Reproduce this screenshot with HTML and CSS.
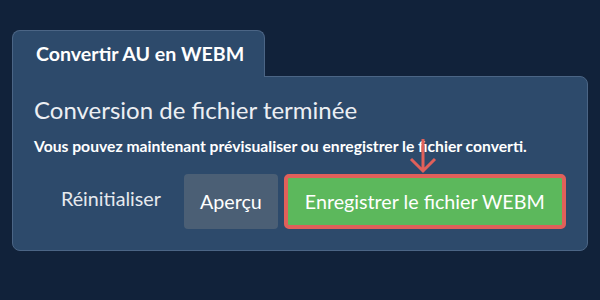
FILE: index.html
```html
<!DOCTYPE html>
<html lang="fr">
<head>
  <meta charset="UTF-8">
  <title>Convertir AU en WEBM</title>
  <link rel="stylesheet" href="styles.css">
</head>
<body>
  <div class="panel">
    <div class="tab">Convertir AU en WEBM</div>
    <div class="card">
      <h2 class="title">Conversion de fichier terminée</h2>
      <p class="text">Vous pouvez maintenant prévisualiser ou enregistrer le fichier converti.</p>
      <div class="actions">
        <button class="btn link">Réinitialiser</button>
        <button class="btn grey">Aperçu</button>
        <div class="save-wrap">
          <button class="btn save">Enregistrer le fichier WEBM</button>
          <svg class="arrow" width="30" height="36" viewBox="0 0 30 36">
            <path d="M15 1 V33 M3 21 L15 33 L27 21" fill="none" stroke="#e0605a" stroke-width="3"/>
          </svg>
        </div>
      </div>
    </div>
  </div>
</body>
</html>
```

FILE: styles.css
```css
body {
  margin: 0;
  background: #11223a;
  font-family: Lato, "Noto Sans", sans-serif;
  color: #fff;
}
.panel {
  padding: 30px 12px 0 12px;
}
.tab {
  display: inline-block;
  box-sizing: border-box;
  width: 253px;
  height: 47px;
  padding: 11px 0 0 23px;
  background: #2d4a6b;
  border: 1px solid #4b6585;
  border-bottom: none;
  border-radius: 8px 8px 0 0;
  font-size: 19.6px;
  font-weight: bold;
  position: relative;
  z-index: 1;
  margin-bottom: -1px;
}
.card {
  box-sizing: border-box;
  width: 576px;
  height: 175px;
  background: #2d4a6b;
  border: 1px solid #4b6585;
  border-radius: 0 8px 8px 8px;
  padding: 17px 21px 0 21px;
}
.title {
  margin: 0;
  font-size: 24px;
  font-weight: normal;
  color: #eceff3;
  line-height: 32px;
}
.text {
  margin: 10px 0 0 0;
  font-size: 15.7px;
  font-weight: bold;
  line-height: 20px;
}
.actions {
  display: flex;
  align-items: center;
  gap: 6px;
  margin-top: 18px;
  padding-left: 10px;
}
.btn {
  font-family: Lato, "Noto Sans", sans-serif;
  font-size: 19.7px;
  color: #fff;
  height: 55px;
  padding: 0 16px;
  border: none;
  border-radius: 4px;
  background: transparent;
}
.btn.link {
  color: #e6e9ee;
  padding: 0 17px 6px 17px;
}
.btn.grey {
  background: #4b5f75;
}
.save-wrap {
  position: relative;
}
.btn.save {
  display: block;
  width: 282px;
  background: #5cb85c;
  border: 4px solid #e0605a;
  border-radius: 5px;
  padding: 0;
}
.arrow {
  position: absolute;
  left: 124px;
  top: -36px;
}
```
